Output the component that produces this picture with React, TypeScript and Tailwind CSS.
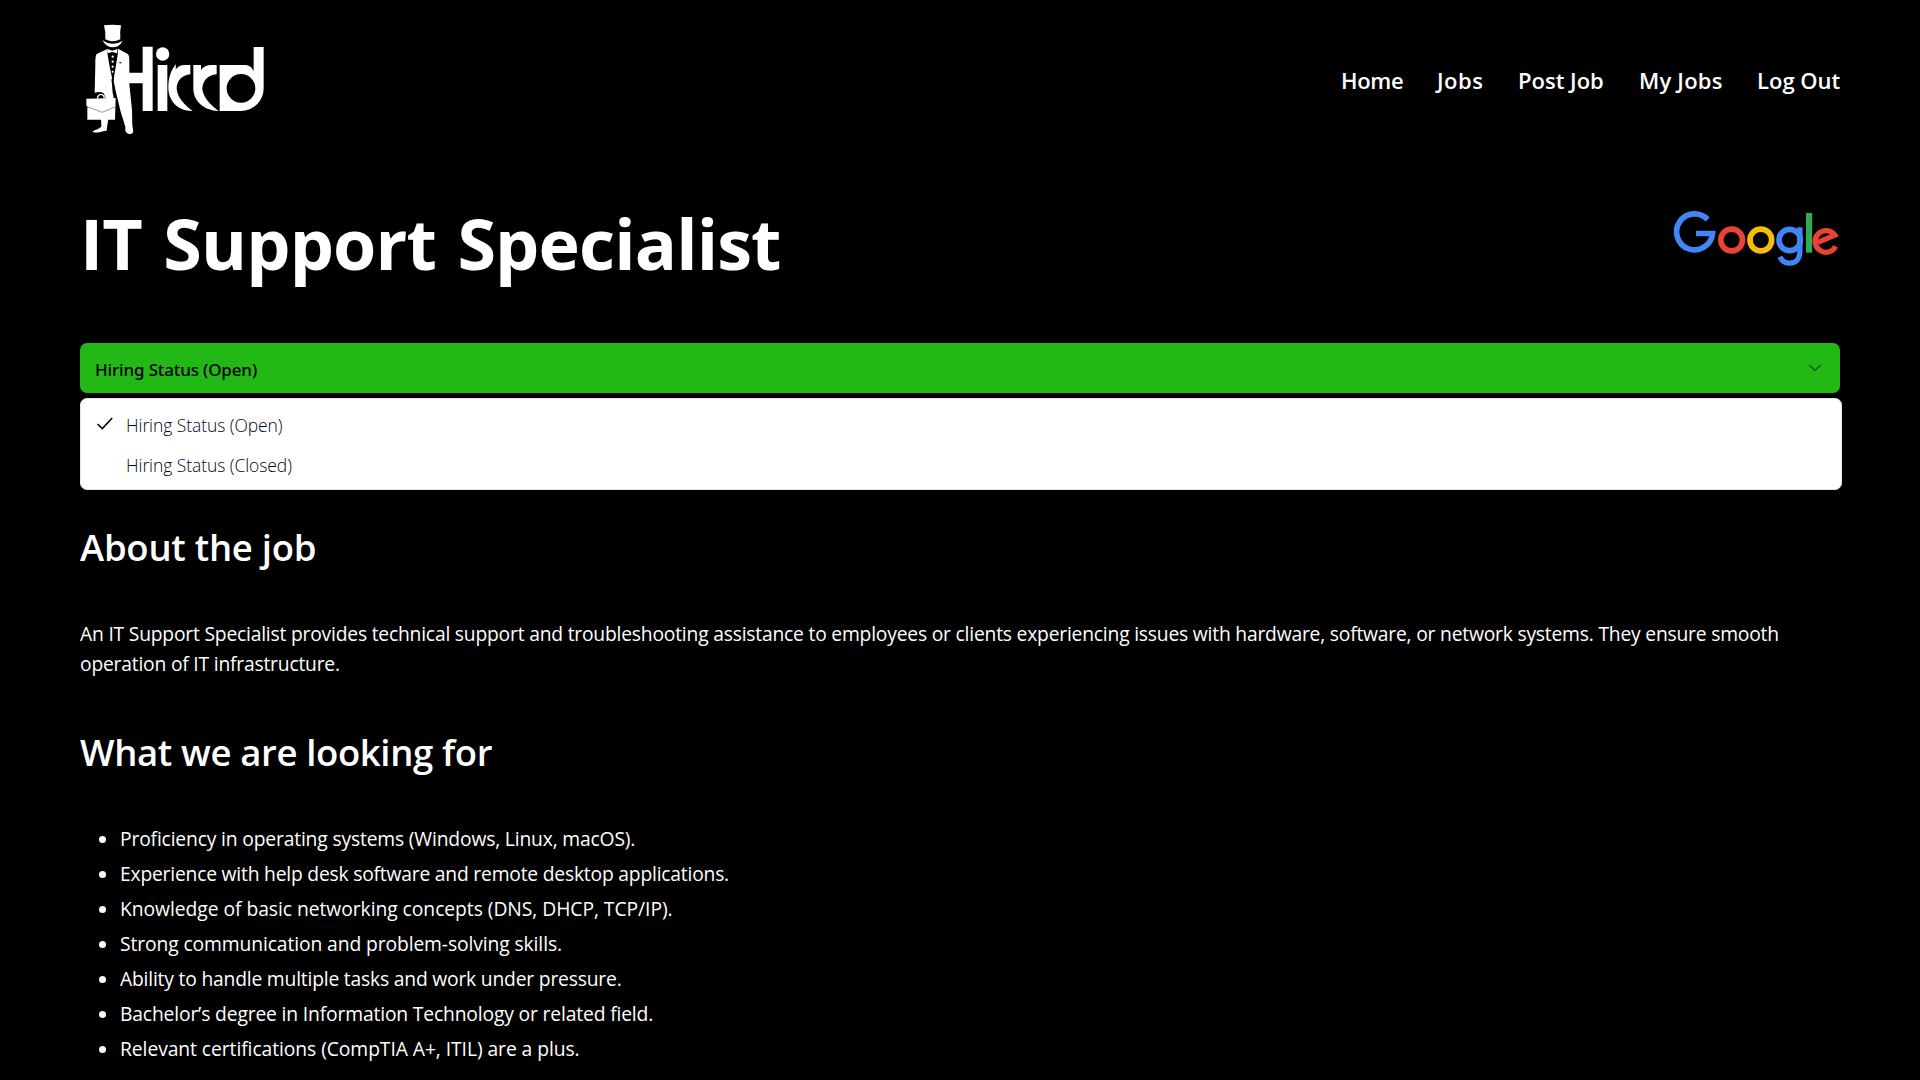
import React from "react";

const navLinks = [
  { label: "Home", cls: "w-[96px] tracking-[-0.3px]" },
  { label: "Jobs", cls: "w-[81px] tracking-[0.5px]" },
  { label: "Post Job", cls: "w-[121px] tracking-[0px]" },
  { label: "My Jobs", cls: "w-[118px] tracking-[0.2px]" },
  { label: "Log Out", cls: "w-[83px] tracking-[0px]" },
];

const requirements = [
  { text: "Proficiency in operating systems (Windows, Linux, macOS).", cls: "tracking-[-0.17px]" },
  { text: "Experience with help desk software and remote desktop applications.", cls: "tracking-[-0.21px]" },
  { text: "Knowledge of basic networking concepts (DNS, DHCP, TCP/IP).", cls: "tracking-[-0.05px]" },
  { text: "Strong communication and problem-solving skills.", cls: "tracking-[-0.11px]" },
  { text: "Ability to handle multiple tasks and work under pressure.", cls: "tracking-[-0.2px]" },
  { text: "Bachelor’s degree in Information Technology or related field.", cls: "tracking-[-0.16px]" },
  { text: "Relevant certifications (CompTIA A+, ITIL) are a plus.", cls: "tracking-[-0.07px]" },
];

function HirrdLogo() {
  return (
    <svg viewBox="0 0 630 405" className="-ml-[10px] h-[135px] w-[210px] shrink-0" fill="#fff" role="img" aria-label="Hirrd">
      {/* hat */}
      <path d="M102 46 Q128 43 153 46 Q149 68 151 88 Q128 100 106 88 Q108 68 102 46Z" />
      <path d="M97 90 Q128 112 158 92 Q148 112 127 112 Q107 111 97 90Z" />
      {/* coat and legs */}
      <path d="M112 117 L80 132 Q75 140 76 165 L74 248 L96 250 L108 268 L131 268 L128 238 L124 208 L130 206 L133 226 L152 305 L166 350 L166 362 Q170 372 182 372 Q192 370 189 358 L187 346 L186 300 L178 222 L178 150 Q178 134 172 131 L146 117Z" />
      <path d="M93 326 L115 326 L112 345 L110 362 L99 364 Q84 370 67 366 Q70 361 84 357 L94 350Z" />
      {/* shirt and bow tie */}
      <path fill="#000" d="M112 128 L144 128 L139 160 L130 212 L126 203 L118 165Z" />
      <path fill="#000" d="M126 203 L131 203 L130 214 L133 226 L136 262 L128 250Z" />
      <path fill="#000" d="M112 114 L144 114 L144 130 L112 130Z" />
      <path d="M112 117 L127 122 L142 117 L142 130 L127 126 L112 130Z" />
      <circle cx="128" cy="140" r="3.4" />
      <circle cx="128" cy="155" r="3.4" />
      <circle cx="128" cy="170" r="3.4" />
      <circle cx="128" cy="185" r="3" />
      <path fill="#000" d="M147 156 L155 157 L151 161Z" />
      {/* briefcase */}
      <path fill="#000" d="M74 249 Q90 243 101 250 L108 267 L78 267Z" />
      <path d="M82 265 Q84 253 93 253 Q102 254 103 265" fill="none" stroke="#fff" strokeWidth="4" />
      <path d="M49 266 L137 264 L135 329 L52 329 L52 292 L49 287Z" />
      <path d="M51 290 L90 304 L96 307 L135 291 M49 286 L54 294" fill="none" stroke="#000" strokeWidth="1.2" />
      {/* wordmark */}
      <path d="M176 188 H218 V110 H248 V303 H218 V220 H176Z" />
      <circle cx="278" cy="132" r="20" />
      <rect x="263" y="165" width="29" height="138" />
      <path d="M318 163 L317 178 Q328 165 342 165 H361 V193 C336 195 320 212 320 236 C322 260 340 282 368 303 C326 304 296 275 295 235 C295 205 302 180 318 163Z" />
      <path d="M370 165 H393 V180 Q404 165 424 165 H440 V193 C412 195 397 214 397 238 C400 262 420 284 446 303 C402 302 370 274 370 235Z" />
      <path fillRule="evenodd" d="M449 165 H528 Q545 168 551 184 V111 H581 V235 A68 68 0 0 1 513 303 H449Z M513 192 A43 43 0 1 0 513 278 A43 43 0 1 0 513 192Z" />
    </svg>
  );
}

function GoogleLogo() {
  return (
    <svg viewBox="-1 -1 630 270" className="-mr-[20px] h-[90px] w-[210px] shrink-0" fill="none" role="img" aria-label="Google">
      <path d="M172 87.500 A54 54 0 1 0 186.500 129.500 H137" stroke="#4285F4" strokeWidth="17" />
      <circle cx="244" cy="149" r="32.500" stroke="#EA4335" strokeWidth="17" />
      <circle cx="331.500" cy="149" r="32.500" stroke="#FBBC05" strokeWidth="17" />
      <circle cx="418" cy="149" r="32" stroke="#4285F4" strokeWidth="17" />
      <path d="M448.500 111 V184 C448.500 207 436 218.500 418 218.500 C404 218.500 394 211 389 199" stroke="#4285F4" strokeWidth="16" />
      <rect x="467" y="68" width="18.500" height="119" fill="#34A853" />
      <path d="M556 168 A32.500 32.500 0 1 1 553.500 134.500 L503 156" stroke="#EA4335" strokeWidth="16" />
    </svg>
  );
}

export default function App() {
  return (
    <div className="min-h-screen w-full bg-black px-[80px] font-['Open_Sans',sans-serif] text-white">
      <header className="flex h-[155px] items-center justify-between">
        <HirrdLogo />
        <nav className="flex pt-[5px] text-[22px] leading-[30px] font-semibold">
          {navLinks.map((l) => (
            <a key={l.label} href="#" className={`block whitespace-nowrap ${l.cls}`}>
              {l.label}
            </a>
          ))}
        </nav>
      </header>

      <main>
        <div className="flex justify-between pt-[35px]">
          <h1 className="pt-[8px] text-[70px] leading-[90px] font-bold tracking-[-0.85px] whitespace-nowrap [word-spacing:4px]">
            IT Support Specialist
          </h1>
          <GoogleLogo />
        </div>

        <div className="relative mt-[55px]">
          <button className="flex h-[50px] w-full items-center justify-between rounded-[7px] bg-[#22b816] pr-4 pl-[15px] text-black">
            <span className="pt-[4px] font-['Noto_Sans'] text-[17px] leading-[24px] font-medium tracking-[-0.15px]">
              Hiring Status (Open)
            </span>
            <svg viewBox="0 0 18 18" className="h-[18px] w-[18px] opacity-50" fill="none" stroke="currentColor" strokeWidth="1.3">
              <path d="M3.300 6 L9 11.500 L14.700 6" />
            </svg>
          </button>
          <ul className="absolute top-[55px] left-0 h-[92px] w-[1762px] rounded-[7px] border border-slate-200 bg-white py-[5px] text-[17.500px] leading-[40px] tracking-[-0.08px] text-slate-950">
            <li className="flex h-[40px] items-center">
              <span className="flex w-[45px] pl-[15px]">
                <svg viewBox="0 0 18 14" className="h-[14px] w-[18px]" fill="none" stroke="currentColor" strokeWidth="1.6">
                  <path d="M1.500 7 L6.300 11.500 L16.200 1" />
                </svg>
              </span>
              <span className="pt-[1px] font-light">Hiring Status (Open)</span>
            </li>
            <li className="flex h-[40px] items-center pl-[45px]">
              <span className="pt-[1px] font-light">Hiring Status (Closed)</span>
            </li>
          </ul>
        </div>

        <h2 className="mt-[131px] text-[36.500px] leading-[46px] font-semibold tracking-[-0.25px]">About the job</h2>
        <p className="mt-[49px] text-[19.300px] leading-[30px] tracking-[-0.21px]">
          An IT Support Specialist provides technical support and troubleshooting assistance to employees or clients
          experiencing issues with hardware, software, or network systems. They ensure smooth operation of IT
          infrastructure.
        </p>

        <h2 className="mt-[50px] text-[36.500px] leading-[46px] font-semibold tracking-[-0.36px]">
          What we are looking for
        </h2>
        <ul className="mt-[46px] text-[19.300px] leading-[35px]">
          {requirements.map((r) => (
            <li key={r.text} className={`flex items-center pl-[19px] ${r.cls}`}>
              <span className="mt-[2px] mr-[14px] h-[7px] w-[7px] rounded-full bg-white" />
              {r.text}
            </li>
          ))}
        </ul>
      </main>
    </div>
  );
}
